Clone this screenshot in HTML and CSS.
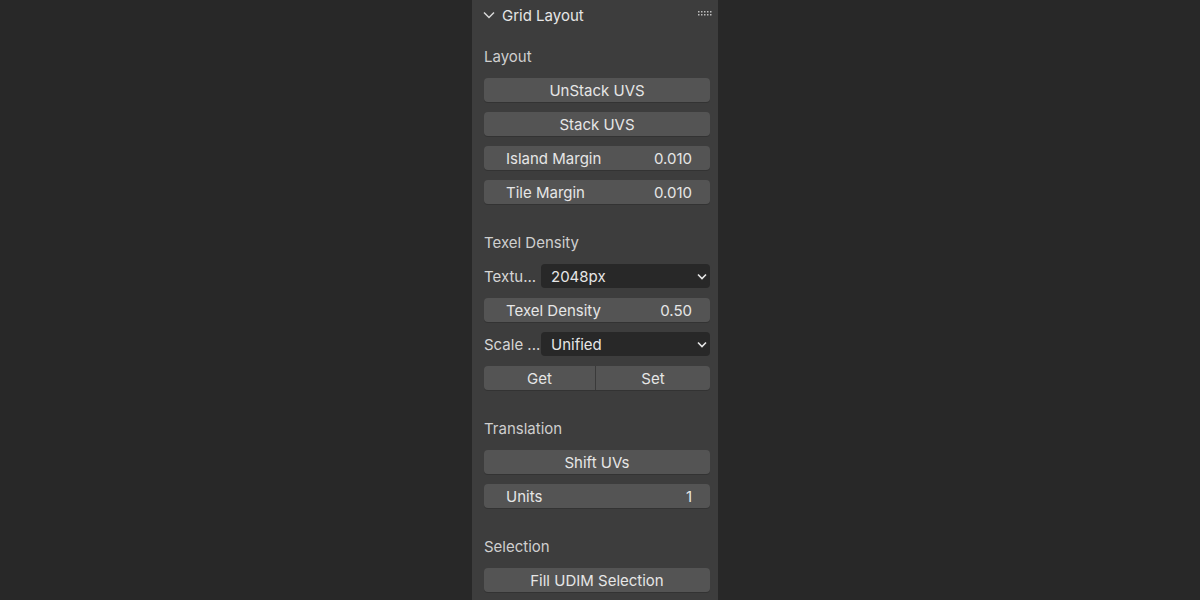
FILE: index.html
```html
<!DOCTYPE html>
<html>
<head>
<meta charset="utf-8">
<link rel="stylesheet" href="styles.css">
</head>
<body>
<div class="panel">
  <div class="header">
    <svg class="chev" width="12" height="8" viewBox="0 0 12 8"><path d="M1 1.5 L6 6.5 L11 1.5" fill="none" stroke="#d8d8d8" stroke-width="1.5"/></svg>
    <span class="title">Grid Layout</span>
    <svg class="grip" width="15" height="7" viewBox="0 0 15 7">
      <g fill="#bdbdbd">
        <rect x="0" y="0" width="1.5" height="1.5"/><rect x="3" y="0" width="1.5" height="1.5"/><rect x="6" y="0" width="1.5" height="1.5"/><rect x="9" y="0" width="1.5" height="1.5"/><rect x="12" y="0" width="1.5" height="1.5"/>
        <rect x="0" y="3" width="1.5" height="1.5"/><rect x="3" y="3" width="1.5" height="1.5"/><rect x="6" y="3" width="1.5" height="1.5"/><rect x="9" y="3" width="1.5" height="1.5"/><rect x="12" y="3" width="1.5" height="1.5"/>
      </g>
    </svg>
  </div>

  <div class="section first">
    <div class="label">Layout</div>
    <div class="btn">UnStack UVS</div>
    <div class="btn">Stack UVS</div>
    <div class="btn field"><span>Island Margin</span><span>0.010</span></div>
    <div class="btn field"><span>Tile Margin</span><span>0.010</span></div>
  </div>

  <div class="section">
    <div class="label">Texel Density</div>
    <div class="row">
      <span class="rowlabel">Textu...</span>
      <div class="dropdown"><span>2048px</span><svg width="10" height="7" viewBox="0 0 10 7"><path d="M1 1.5 L5 5.5 L9 1.5" fill="none" stroke="#e6e6e6" stroke-width="1.6"/></svg></div>
    </div>
    <div class="btn field"><span>Texel Density</span><span>0.50</span></div>
    <div class="row">
      <span class="rowlabel">Scale ...</span>
      <div class="dropdown"><span>Unified</span><svg width="10" height="7" viewBox="0 0 10 7"><path d="M1 1.5 L5 5.5 L9 1.5" fill="none" stroke="#e6e6e6" stroke-width="1.6"/></svg></div>
    </div>
    <div class="split">
      <div class="half left">Get</div>
      <div class="half right">Set</div>
    </div>
  </div>

  <div class="section">
    <div class="label">Translation</div>
    <div class="btn">Shift UVs</div>
    <div class="btn field"><span>Units</span><span>1</span></div>
  </div>

  <div class="section">
    <div class="label">Selection</div>
    <div class="btn">Fill UDIM Selection</div>
  </div>
</div>
</body>
</html>
```

FILE: styles.css
```css
html, body {
  margin: 0;
  padding: 0;
  background: #282828;
  height: 100%;
  overflow: hidden;
}
body {
  display: flex;
  padding-left: 472px;
  font-family: Inter, "Noto Sans", sans-serif;
  font-size: 15px;
  color: #e4e4e4;
  white-space: nowrap;
}
.panel {
  width: 246px;
  height: 600px;
  background: #3d3d3d;
  box-sizing: border-box;
  padding: 0 8px 0 12px;
  display: flex;
  flex-direction: column;
}
.header {
  height: 30px;
  display: flex;
  align-items: center;
  position: relative;
}
.chev {
  margin-left: -1px;
  margin-right: 7px;
}
.title {
  color: #e6e6e6;
}
.grip {
  position: absolute;
  right: -3px;
  top: 11px;
}
.section {
  display: flex;
  flex-direction: column;
  gap: 10px;
  margin-top: 26px;
}
.section.first {
  margin-top: 14px;
}
.label {
  height: 24px;
  line-height: 26px;
  color: #cfcfcf;
}
.btn {
  height: 24px;
  background: #545454;
  border-radius: 4px;
  box-shadow: 0 1px 0 #333333;
  display: flex;
  align-items: center;
  justify-content: center;
  color: #e6e6e6;
}
.btn.field {
  justify-content: space-between;
  padding: 0 18px 0 22px;
}
.row {
  height: 24px;
  display: flex;
  align-items: center;
}
.rowlabel {
  flex: 0 0 57px;
  color: #d6d6d6;
}
.dropdown {
  flex: 1;
  height: 24px;
  background: #282828;
  border-radius: 4px;
  display: flex;
  align-items: center;
  justify-content: space-between;
  padding: 0 2px 0 10px;
  box-sizing: border-box;
  color: #e6e6e6;
}
.dropdown svg {
  margin-right: 1px;
}
.split {
  height: 24px;
  display: flex;
  box-shadow: 0 1px 0 #333333;
  border-radius: 4px;
}
.half {
  flex: 1;
  background: #545454;
  display: flex;
  align-items: center;
  justify-content: center;
  color: #e6e6e6;
}
.half.left {
  flex: 0 0 112px;
  box-sizing: border-box;
  border-radius: 4px 0 0 4px;
  border-right: 1px solid #3a3a3a;
}
.half.right {
  border-radius: 0 4px 4px 0;
}
```
